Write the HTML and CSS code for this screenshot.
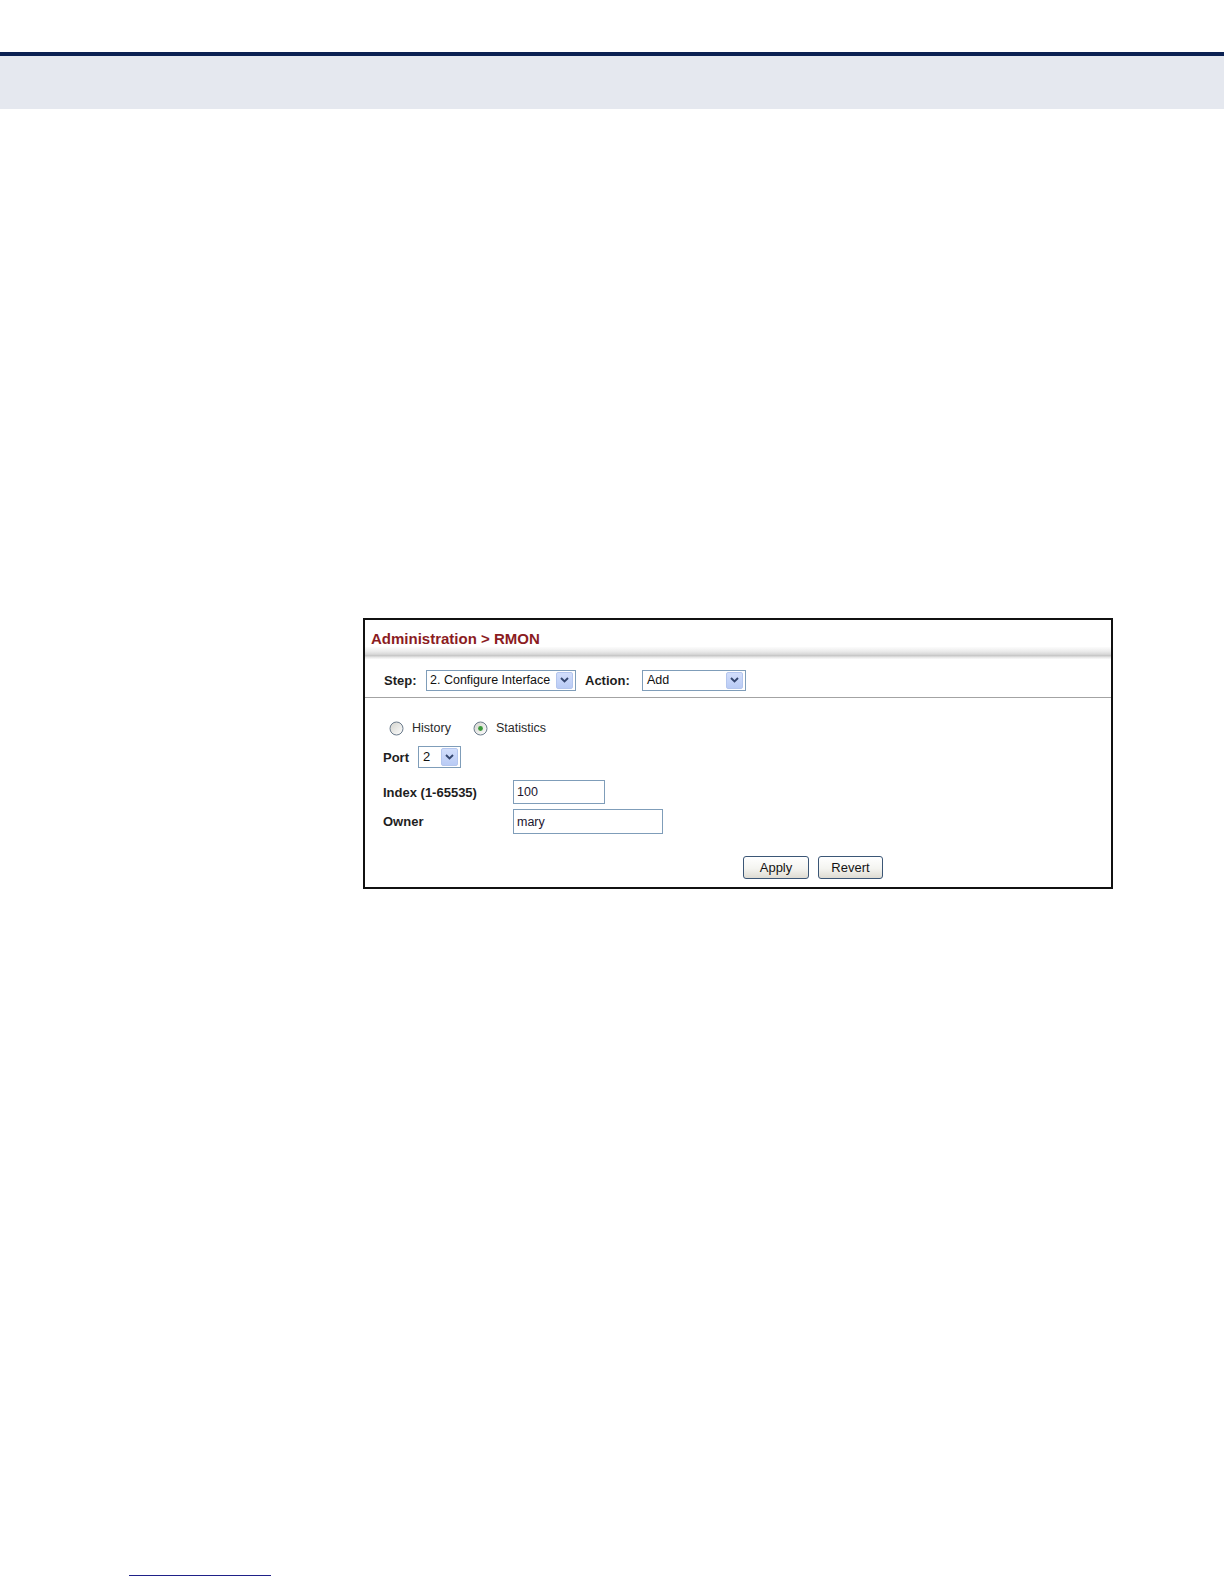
FILE: index.html
```html
<!DOCTYPE html>
<html lang="en">
<head>
<meta charset="utf-8">
<title>Administration &gt; RMON</title>
<link rel="stylesheet" href="styles.css">
</head>
<body>
<div class="page">
  <header class="top">
    <div class="rule"></div>
    <div class="band"></div>
  </header>

  <main class="main">
    <section class="panel">
      <h1 class="title">Administration &gt; RMON</h1>
      <div class="shade"></div>

      <div class="steprow">
        <span class="lbl lbl-step">Step:</span>
        <div class="sel sel-step">
          <span class="sel-text">2. Configure Interface</span>
          <span class="sel-btn"><svg width="9" height="6" viewBox="0 0 9 6"><path d="M1 1 L4.5 4.5 L8 1" fill="none" stroke="#34466e" stroke-width="1.9"/></svg></span>
        </div>
        <span class="lbl lbl-action">Action:</span>
        <div class="sel sel-action">
          <span class="sel-text">Add</span>
          <span class="sel-btn"><svg width="9" height="6" viewBox="0 0 9 6"><path d="M1 1 L4.5 4.5 L8 1" fill="none" stroke="#34466e" stroke-width="1.9"/></svg></span>
        </div>
      </div>
      <div class="sep"></div>

      <div class="form">
        <div class="radios">
          <label class="radio">
            <svg class="radio-ico" width="15" height="15" viewBox="0 0 15 15">
              <defs>
                <linearGradient id="rg1" x1="0" y1="0" x2="1" y2="1">
                  <stop offset="0" stop-color="#d2d2cc"/>
                  <stop offset="1" stop-color="#ffffff"/>
                </linearGradient>
              </defs>
              <circle cx="7.5" cy="7.5" r="6.5" fill="url(#rg1)" stroke="#6b7b8c" stroke-width="1"/>
            </svg>
            <span>History</span>
          </label>
          <label class="radio radio-stats">
            <svg class="radio-ico" width="15" height="15" viewBox="0 0 15 15">
              <defs>
                <linearGradient id="rg2" x1="0" y1="0" x2="1" y2="1">
                  <stop offset="0" stop-color="#d2d2cc"/>
                  <stop offset="1" stop-color="#ffffff"/>
                </linearGradient>
              </defs>
              <circle cx="7.5" cy="7.5" r="6.5" fill="url(#rg2)" stroke="#6b7b8c" stroke-width="1"/>
              <circle cx="7.5" cy="7.5" r="2.4" fill="#3a9a3a"/>
            </svg>
            <span>Statistics</span>
          </label>
        </div>

        <div class="row row-port">
          <span class="lbl lbl-port">Port</span>
          <div class="sel sel-port">
            <span class="sel-text">2</span>
            <span class="sel-btn"><svg width="9" height="6" viewBox="0 0 9 6"><path d="M1 1 L4.5 4.5 L8 1" fill="none" stroke="#34466e" stroke-width="1.9"/></svg></span>
          </div>
        </div>

        <div class="row row-index">
          <span class="lbl col">Index (1-65535)</span>
          <input class="txt txt-index" type="text" value="100">
        </div>

        <div class="row row-owner">
          <span class="lbl col">Owner</span>
          <input class="txt txt-owner" type="text" value="mary">
        </div>

        <div class="buttons">
          <button class="btn btn-apply" type="button">Apply</button>
          <button class="btn btn-revert" type="button">Revert</button>
        </div>
      </div>
    </section>
  </main>

  <footer class="foot">
    <div class="footline"></div>
  </footer>
</div>
</body>
</html>
```

FILE: styles.css
```css
* { box-sizing: border-box; }

html, body {
  margin: 0;
  padding: 0;
  background: #ffffff;
}

body {
  font-family: "Liberation Sans", Arial, sans-serif;
  color: #1a1a1a;
}

.page {
  width: 1224px;
  height: 1584px;
  overflow: hidden;
}

/* header */
.top {
  padding-top: 52px;
}
.rule {
  height: 4px;
  background: #0b2152;
}
.band {
  height: 53px;
  background: #e5e8ef;
}

/* main */
.main {
  padding-top: 509px;
}

.panel {
  margin-left: 363px;
  width: 750px;
  height: 271px;
  border: 2px solid #111111;
  background: #ffffff;
}

.title {
  margin: 0;
  padding: 11px 0 0 6px;
  height: 27px;
  font-size: 15px;
  line-height: 16px;
  font-weight: bold;
  color: #8b1c1f;
}

.shade {
  height: 12px;
  background: linear-gradient(to bottom,
    #fcfcfc 0%,
    #ececec 35%,
    #d9d9d9 60%,
    #c6c6c6 72%,
    #e4e4e4 84%,
    #fafafa 100%);
}

.steprow {
  display: flex;
  align-items: center;
  height: 22px;
  margin-top: 10px;
  margin-bottom: 6px;
  padding-left: 19px;
}

.lbl {
  font-size: 13px;
  font-weight: bold;
  color: #1e1e1e;
  white-space: nowrap;
}

.lbl-step { width: 42px; }
.lbl-action { margin-left: 9px; width: 57px; }

.sel {
  display: flex;
  align-items: stretch;
  justify-content: space-between;
  height: 21px;
  border: 1px solid #7f9db9;
  background: #ffffff;
  padding: 1px 2px 1px 0;
}

.sel-text {
  font-size: 12.5px;
  line-height: 17px;
  color: #111111;
  padding-left: 3px;
  white-space: nowrap;
}

.sel-btn {
  width: 17px;
  flex: none;
  display: flex;
  align-items: center;
  justify-content: center;
  border: 1px solid #b4c6ee;
  border-radius: 2px;
  background: linear-gradient(to bottom, #d2defb 0%, #b9cbf5 100%);
}

.sel-step { width: 150px; }
.sel-action { width: 104px; }
.sel-action .sel-text { padding-left: 4px; }
.sel-port { width: 43px; height: 22px; }
.sel-port .sel-text { padding-left: 4px; font-size: 13px; line-height: 18px; }

.sep {
  height: 1px;
  background: #a3a3a3;
}

/* form body */
.form {
  padding: 22px 0 0 18px;
}

.radios {
  display: flex;
  align-items: center;
  height: 16px;
  padding-left: 6px;
}

.radio {
  display: flex;
  align-items: center;
  font-size: 12.5px;
  color: #2a2a2a;
}

.radio-ico {
  display: block;
  margin-right: 8px;
}

.radio-stats {
  margin-left: 22px;
}

.row {
  display: flex;
  align-items: center;
}

.row-port {
  margin-top: 10px;
  height: 22px;
}
.lbl-port { width: 35px; }

.row-index {
  margin-top: 12px;
  height: 24px;
}
.row-owner {
  margin-top: 5px;
  height: 25px;
}

.col { width: 130px; }

.txt {
  margin: 0;
  height: 100%;
  border: 1px solid #7f9db9;
  padding: 0 3px;
  font-family: "Liberation Sans", Arial, sans-serif;
  font-size: 12.5px;
  color: #1c1530;
  background: #ffffff;
  outline: none;
}
.txt-index { width: 92px; }
.txt-owner { width: 150px; }

.buttons {
  display: flex;
  gap: 9px;
  margin-top: 22px;
  padding-left: 360px;
}

.btn {
  height: 23px;
  margin: 0;
  padding: 0;
  border: 1px solid #3b5676;
  border-radius: 3px;
  background: linear-gradient(to bottom, #ffffff 0%, #f4f4f0 55%, #dedbd2 100%);
  font-family: "Liberation Sans", Arial, sans-serif;
  font-size: 13px;
  color: #141414;
}
.btn-apply { width: 66px; }
.btn-revert { width: 65px; }

/* footer */
.foot {
  padding-top: 686px;
  padding-left: 129px;
}
.footline {
  width: 142px;
  height: 1px;
  background: #1f2188;
}
```
